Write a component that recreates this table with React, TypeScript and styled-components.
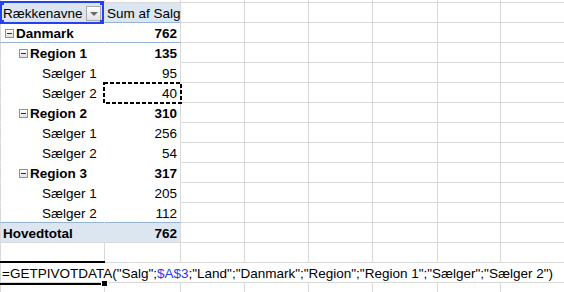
import React from 'react';
import styled, { createGlobalStyle, css } from 'styled-components';

const GRID = '#d9d9d9';
const ACCENT = '#95b3d7';
const BAND = '#dce6f1';
const REF = '#2340f2';
const COLS = [105, 76, 64, 64, 64, 65, 63, 64];

type PivotRow = {
  label: string;
  value: number;
  kind: 'country' | 'region' | 'seller';
  line?: boolean;
  marked?: boolean;
};

const regions = [
  { name: 'Region 1', total: 135, sellers: [95, 40] },
  { name: 'Region 2', total: 310, sellers: [256, 54] },
  { name: 'Region 3', total: 317, sellers: [205, 112] },
];

const rows: PivotRow[] = [{ label: 'Danmark', value: 762, kind: 'country', line: true }];
regions.forEach((r, ri) => {
  rows.push({ label: r.name, value: r.total, kind: 'region' });
  r.sellers.forEach((v, si) =>
    rows.push({
      label: `Sælger ${si + 1}`,
      value: v,
      kind: 'seller',
      line: ri === regions.length - 1 && si === r.sellers.length - 1,
      marked: ri === 0 && si === 1,
    })
  );
});

const indents = { country: 4, region: 18, seller: 41 };

const GlobalStyle = createGlobalStyle`
  html, body {
    margin: 0;
    padding: 0;
    background: #fff;
    overflow: hidden;
  }
  body {
    font-family: 'Liberation Sans', Arial, sans-serif;
    font-size: 13.5px;
    color: #000;
  }
`;

const Sheet = styled.div`
  display: grid;
  grid-template-columns: ${COLS.map((c) => `${c}px`).join(' ')};
  grid-template-rows: 3px;
  grid-auto-rows: 20px;
  width: 565px;
  height: 292px;
  overflow: hidden;
`;

const Plain = styled.div<{ $first?: boolean }>`
  box-sizing: border-box;
  border-right: 1px solid ${GRID};
  border-bottom: 1px solid ${GRID};
  ${(p) => p.$first && css`border-left: 1px solid ${GRID};`}
`;

const PivotCell = styled.div<{
  $band?: boolean;
  $line?: string;
  $edge?: boolean;
  $first?: boolean;
  $bold?: boolean;
  $num?: boolean;
  $indent?: number;
}>`
  position: relative;
  box-sizing: border-box;
  padding: 2px 3px 0 ${(p) => p.$indent ?? 2}px;
  line-height: 17px;
  white-space: nowrap;
  text-align: ${(p) => (p.$num ? 'right' : 'left')};
  font-weight: ${(p) => (p.$bold ? 700 : 400)};
  background: ${(p) => (p.$band ? BAND : '#fff')};
  border-bottom: 1px solid ${(p) => p.$line ?? (p.$band ? BAND : '#fff')};
  border-right: 1px solid ${(p) => (p.$edge ? GRID : p.$band ? BAND : '#fff')};
  ${(p) => p.$first && css`border-left: 1px solid ${GRID};`}
`;

const HeaderLabel = styled(PivotCell)`
  display: flex;
  align-items: flex-start;
`;

const DropButton = styled.span`
  margin-left: auto;
  align-self: center;
  width: 15px;
  height: 15px;
  box-sizing: border-box;
  border: 1px solid #a9a9a9;
  background: linear-gradient(#fefefe, #e2e2e2);
  display: flex;
  align-items: center;
  justify-content: center;

  &::after {
    content: '';
    width: 0;
    height: 0;
    border-left: 4px solid transparent;
    border-right: 4px solid transparent;
    border-top: 4px solid #6a6a6a;
  }
`;

const Toggle = styled.span`
  position: relative;
  display: inline-block;
  width: 9px;
  height: 9px;
  box-sizing: border-box;
  margin-right: 2px;
  border: 1px solid #8f9296;
  background: linear-gradient(#ffffff, #dfe1e4);
  vertical-align: 0;

  &::after {
    content: '';
    position: absolute;
    left: 1px;
    top: 3px;
    width: 5px;
    height: 1px;
    background: #2b2b2b;
  }
`;

const RefBox = styled.div`
  position: absolute;
  z-index: 3;
  left: -1px;
  top: -2px;
  width: 104px;
  height: 23px;
  box-sizing: border-box;
  border: 2px solid ${REF};
  pointer-events: none;
`;

const Handle = styled.span<{ $x: 'l' | 'r'; $y: 't' | 'b' }>`
  position: absolute;
  width: 4px;
  height: 4px;
  background: ${REF};
  ${(p) => (p.$x === 'l' ? 'left: -2px;' : 'right: -2px;')}
  ${(p) => (p.$y === 't' ? 'top: -2px;' : 'bottom: -2px;')}
`;

const Ants = styled.svg`
  position: absolute;
  z-index: 3;
  left: -2px;
  top: -1px;
  overflow: visible;
`;

const FormulaCell = styled.div`
  grid-column: 1 / -1;
  position: relative;
  box-sizing: border-box;
  border-left: 1px solid ${GRID};
  border-bottom: 1px solid ${GRID};
  padding: 2px 0 0 1px;
  line-height: 17px;
  white-space: nowrap;
`;

const RefText = styled.span`
  color: ${REF};
`;

const ActiveTop = styled.span`
  position: absolute;
  z-index: 3;
  left: -1px;
  top: -2px;
  width: 105px;
  height: 2px;
  background: #000;
`;

const ActiveBottom = styled.span`
  position: absolute;
  z-index: 3;
  left: -1px;
  top: 20px;
  width: 101px;
  height: 2px;
  background: #000;
`;

const FillHandle = styled.span`
  position: absolute;
  z-index: 3;
  left: 101px;
  top: 18px;
  width: 5px;
  height: 5px;
  background: #000;
  box-shadow: 0 0 0 1px #fff;
`;

const fillers = (n: number, key: string, first = false) =>
  Array.from({ length: n }, (_, i) => <Plain key={`${key}-${i}`} $first={first && i === 0} />);

const App: React.FC = () => {
  return (
    <>
      <GlobalStyle />
      <Sheet>
        {fillers(8, 'top', true)}

        <HeaderLabel $band $first $line={ACCENT}>
          Rækkenavne
          <DropButton />
          <RefBox>
            <Handle $x="l" $y="t" />
            <Handle $x="r" $y="t" />
            <Handle $x="l" $y="b" />
            <Handle $x="r" $y="b" />
          </RefBox>
        </HeaderLabel>
        <PivotCell $band $edge $line={ACCENT}>
          Sum af Salg
        </PivotCell>
        {fillers(6, 'head')}

        {rows.map((r, i) => {
          const line = r.line ? ACCENT : undefined;
          const bold = r.kind !== 'seller';
          return (
            <React.Fragment key={i}>
              <PivotCell $first $bold={bold} $line={line} $indent={indents[r.kind]}>
                {r.kind !== 'seller' && <Toggle />}
                {r.label}
              </PivotCell>
              <PivotCell $edge $num $bold={bold} $line={line}>
                {r.value}
                {r.marked && (
                  <Ants width="79" height="22">
                    <rect
                      x="1"
                      y="1"
                      width="77"
                      height="20"
                      fill="none"
                      stroke="#000"
                      strokeWidth="2"
                      strokeDasharray="4 2"
                    />
                  </Ants>
                )}
              </PivotCell>
              {fillers(6, `r${i}`)}
            </React.Fragment>
          );
        })}

        <PivotCell $band $first $bold $line={GRID}>
          Hovedtotal
        </PivotCell>
        <PivotCell $band $edge $num $bold $line={GRID}>
          762
        </PivotCell>
        {fillers(6, 'total')}

        {fillers(8, 'empty', true)}

        <FormulaCell>
          =GETPIVOTDATA("Salg";<RefText>$A$3</RefText>;"Land";"Danmark";"Region";"Region 1";"Sælger";"Sælger 2")
          <ActiveTop />
          <ActiveBottom />
          <FillHandle />
        </FormulaCell>

        {fillers(8, 'bottom', true)}
      </Sheet>
    </>
  );
};

export default App;
